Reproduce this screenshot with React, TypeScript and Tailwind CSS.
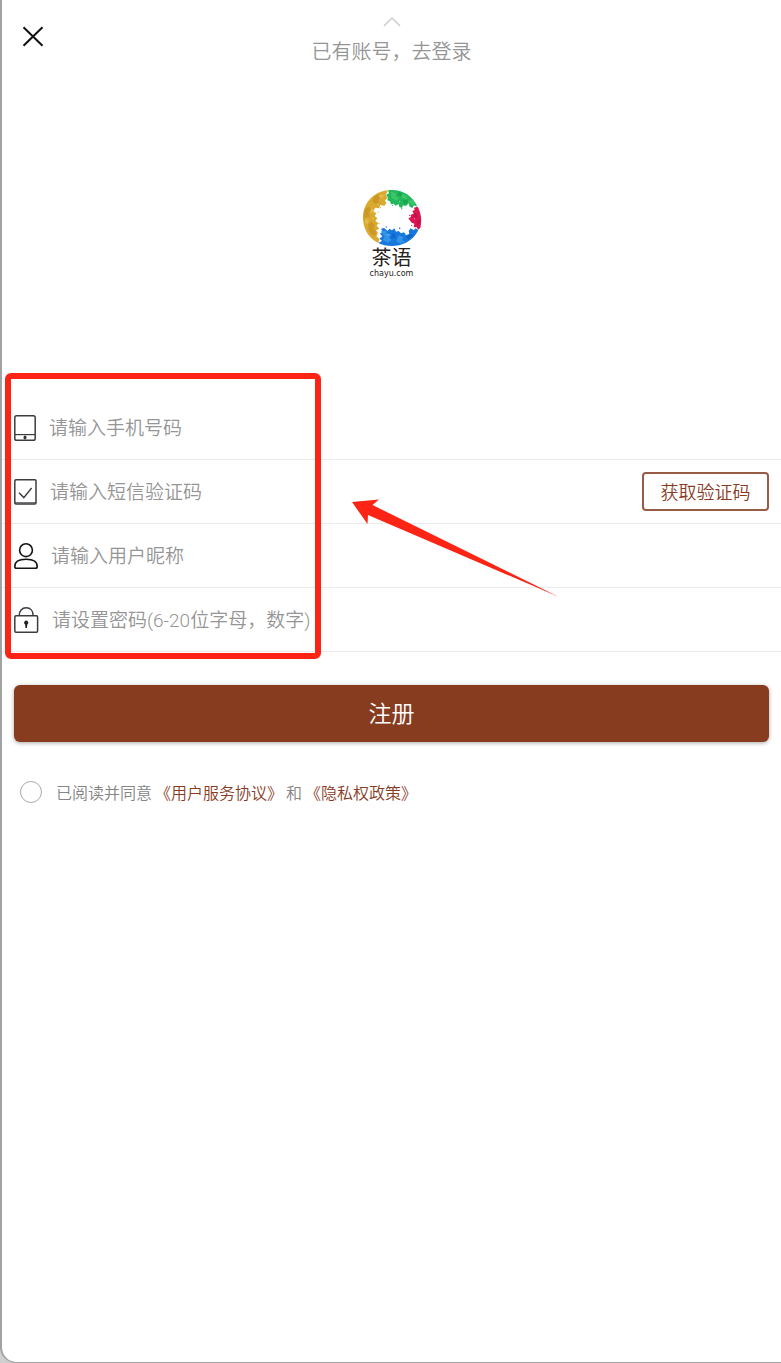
import { useState } from "react";
import type { FormEvent, ReactNode } from "react";

type Field = {
  id: string;
  type: string;
  placeholder: string;
  icon: ReactNode;
};

const fields: Field[] = [
  { id: "phone", type: "tel", placeholder: "请输入手机号码", icon: <PhoneIcon /> },
  { id: "code", type: "text", placeholder: "请输入短信验证码", icon: <CodeIcon /> },
  { id: "nickname", type: "text", placeholder: "请输入用户昵称", icon: <UserIcon /> },
  { id: "password", type: "password", placeholder: "请设置密码(6-20位字母，数字)", icon: <LockIcon /> }
];

function PhoneIcon() {
  return (
    <svg width="22" height="26" viewBox="0 0 22 26" fill="none" stroke="#3c3c40" strokeWidth="1.5" className="shrink-0">
      <rect x="0.8" y="0.8" width="20.4" height="24.4" rx="1.8" />
      <path d="M1 19.6h20" strokeWidth="1.2" />
      <ellipse cx="11" cy="22.4" rx="1.5" ry="2" fill="#333" stroke="none" />
    </svg>
  );
}

function CodeIcon() {
  return (
    <svg width="23" height="26" viewBox="0 0 23 26" fill="none" stroke="#3c3c40" strokeWidth="1.5" className="shrink-0">
      <rect x="0.8" y="0.8" width="21.2" height="24.2" rx="1.2" />
      <path d="M1 23.8h21" strokeWidth="1" />
      <path d="M5 13.8l4.8 4.8L17.6 9" strokeWidth="1.4" />
    </svg>
  );
}

function UserIcon() {
  return (
    <svg width="24" height="26" viewBox="0 0 24 26" fill="none" stroke="#141414" strokeWidth="1.6" className="shrink-0">
      <circle cx="12" cy="7.2" r="6.4" />
      <path d="M2.5 25.2C1.3 25.2.8 24.4.8 23.4c0-4.6 4.4-7.2 11.2-7.2s11.2 2.6 11.2 7.2c0 1-.5 1.8-1.7 1.8z" />
    </svg>
  );
}

function LockIcon() {
  return (
    <svg width="25" height="26" viewBox="0 0 25 26" fill="none" stroke="#3c3c40" strokeWidth="1.5" className="shrink-0">
      <rect x="0.8" y="8.8" width="22.8" height="16.4" rx="1.2" />
      <path d="M5.2 8.6C5.2 3.8 8 .8 12.2.8s7 3 7 7.8" />
      <path d="M12.2 13.6a2.1 2.1 0 0 1 1.1 3.9l-.4 3.5h-1.4l-.4-3.5a2.1 2.1 0 0 1 1.1-3.9z" fill="#222" stroke="none" />
    </svg>
  );
}

function Logo() {
  return (
    <div className="flex flex-col items-center font-normal text-[#262220]">
      <svg width="60" height="58" viewBox="64 27 180 174" aria-hidden="true">
        <path
          d="M142 31C98 35 67 70 67 113c0 34 18 62 46 76l3-12-9-8 5-10-6-8 10-5-8-9 5-8-9-6 6-9-8-6 5-8-10-6 7-11 11 2 4-10 12 2 6-7-4-9 8-8-6-7z"
          fill="#d9aa2e"
        />
        <path d="M98 51l14-8 8 9-8 10 6 7-13 3-10-8zM72 88l12-8 7 8-8 11 5 11-14 2-6 8zM83 132l9-8 10 12-4 10 9 9-5 14-12-8-7-12z" fill="#cb9828" />
        <path d="M113 47l12-5 6 7-9 7zM75 116l10 5-5 11-8-3zM92 85l9 4-5 11-8-5z" fill="#e5b94a" />
        <path
          d="M142 31c37-5 73 13 88 49l-10-4-5 8-8-4-3-10-8 8-9-2-3 8-8-3-2-9-9 5-6-6-8 2-3-9-8-3 2-9-6-7 9-5z"
          fill="#22b75b"
        />
        <path d="M151 35l17 5-5 9 13 4-8 9-16-8zM185 41l17 10-6 7-13-5zM202 65l12-8 10 14-10 5z" fill="#3cc668" />
        <path d="M174 36l10 5-5 8-9-4zM186 61l13-2 3 8-10 6z" fill="#16a453" />
        <path
          d="M231 80c11 21 13 41 8 64l-7 5-4-8-9 1 2-11-8-3-6-8-4-5 8-4-1-7 9-3-4-8 7-3-2-7z"
          fill="#dc1450"
        />
        <path d="M221 98l10 6-3 11-9-4zM228 124l8-6 1 14-7 4z" fill="#bd1549" />
        <path
          d="M113 189c30 16 92 16 120-38l-8-6-6 6-9-6-6 8 2 9-9 3-7-8-9 3-7-7-8 2-5-10-7 6-8-5-5 7-11-9-9 2 5 9-8 6 7 8-9 7 8 6z"
          fill="#1678dc"
        />
        <path d="M121 154l14-2 5 9 12 2-7 10 8 8-11 7-16-8 6-9zM174 166l15 5-6 10 11 3-14 7-13-7z" fill="#3495e8" />
        <path d="M153 159l10 4 1 11-12 1zM196 170l13-9 8 5-12 13z" fill="#0f66cc" />
        <g fill="#d9aa2e">
          <circle cx="119" cy="83" r="2" />
          <circle cx="113" cy="96" r="1.5" />
          <circle cx="115" cy="131" r="2" />
        </g>
        <g fill="#22b75b">
          <circle cx="156" cy="76" r="2" />
          <circle cx="183" cy="86" r="2" />
        </g>
        <g fill="#dc1450">
          <circle cx="207" cy="106" r="2" />
          <circle cx="213" cy="136" r="2" />
        </g>
        <g fill="#1678dc">
          <circle cx="137" cy="141" r="2" />
          <circle cx="177" cy="145" r="2.5" />
        </g>
        <g fill="#fff" opacity="0.8">
          <circle cx="112" cy="72" r="1.5" />
          <circle cx="97" cy="114" r="1.5" />
          <circle cx="177" cy="65" r="1.5" />
          <circle cx="222" cy="116" r="1.5" />
          <circle cx="142" cy="164" r="1.5" />
          <circle cx="194" cy="164" r="1.5" />
        </g>
      </svg>
      <span className="text-xl leading-[22px]">茶语</span>
      <span className="font-['DejaVu_Sans',sans-serif] text-[8px] leading-[10px]">chayu.com</span>
    </div>
  );
}

export default function App() {
  const [values, setValues] = useState<Record<string, string>>({});
  const [agreed, setAgreed] = useState(false);

  const onSubmit = (e: FormEvent) => {
    e.preventDefault();
  };

  return (
    <div className="flex min-h-screen bg-[#cfcfcf] font-['Roboto','Noto_Sans_CJK_SC',sans-serif] font-[350] text-[#959595]">
      <main className="min-w-0 flex-1 rounded-bl-2xl border-b border-l-2 border-[#a2a2a2] bg-white">
        <header className="grid grid-cols-[1fr_auto_1fr] items-start pt-4">
          <button type="button" aria-label="关闭" className="ml-5 mt-2 w-fit text-[#111]">
            <svg width="22" height="24" viewBox="0 0 22 24" fill="none" stroke="currentColor" strokeWidth="2">
              <path d="M1.5 3.2l19 18.6M20.5 3.2l-19 18.6" />
            </svg>
          </button>
          <a href="#login" className="flex flex-col items-center gap-2 text-xl leading-8">
            <svg width="18" height="12" viewBox="0 0 18 12" fill="none" stroke="#ccc" strokeWidth="1.5">
              <path d="M1 10l8-8 8 8" />
            </svg>
            已有账号，去登录
          </a>
        </header>

        <div className="mt-[121px] flex justify-center">
          <Logo />
        </div>

        <form onSubmit={onSubmit} className="relative mt-[117px]">
          {fields.map((f) => (
            <div key={f.id} className="flex h-16 items-center gap-[13px] border-b border-[#ebebeb] px-3">
              <label htmlFor={f.id} aria-label={f.placeholder}>
                {f.icon}
              </label>
              <input
                id={f.id}
                type={f.type}
                placeholder={f.placeholder}
                value={values[f.id] ?? ""}
                onChange={(e) => setValues({ ...values, [f.id]: e.target.value })}
                className="min-w-0 flex-1 bg-transparent pt-1 text-[19px] text-[#333] outline-none placeholder:text-[#959595]"
              />
              {f.id === "code" && (
                <button
                  type="button"
                  className="h-[39px] w-[127px] shrink-0 rounded border-2 border-[#965c45] pt-0.5 text-lg leading-none text-[#883c1f]"
                >
                  获取验证码
                </button>
              )}
            </div>
          ))}

          <div className="px-3 pt-[33px]">
            <button
              type="submit"
              className="h-[57px] w-full rounded-md bg-[#883c1f] pt-1 text-[23px] text-white shadow-[0_1px_4px_rgba(0,0,0,0.35)]"
            >
              注册
            </button>
          </div>

          <div className="flex items-center gap-3.5 px-[18px] pt-9 text-base">
            <input
              id="agree"
              type="checkbox"
              checked={agreed}
              onChange={(e) => setAgreed(e.target.checked)}
              className="size-[22px] appearance-none rounded-full border border-[#aaa] checked:bg-[#883c1f]"
            />
            <div className="flex gap-[3px] pt-1 text-[#883c1f]">
              <label htmlFor="agree" className="text-[#858585]">
                已阅读并同意
              </label>
              <a href="#terms">《用户服务协议》</a>
              <span className="text-[#858585]">和</span>
              <a href="#privacy">《隐私权政策》</a>
            </div>
          </div>

          <div className="pointer-events-none absolute -top-[23px] left-[3px] h-[286px] w-[316px] rounded-md border-6 border-[#fb2415]" />
          <svg
            width="208"
            height="98"
            viewBox="0 0 208 98"
            fill="#fb2415"
            aria-hidden="true"
            className="pointer-events-none absolute left-[350px] top-[103px]"
          >
            <path d="M0 3L27 .5 20.5 6 207 98 16 16l-.5 9z" />
          </svg>
        </form>
      </main>
    </div>
  );
}
